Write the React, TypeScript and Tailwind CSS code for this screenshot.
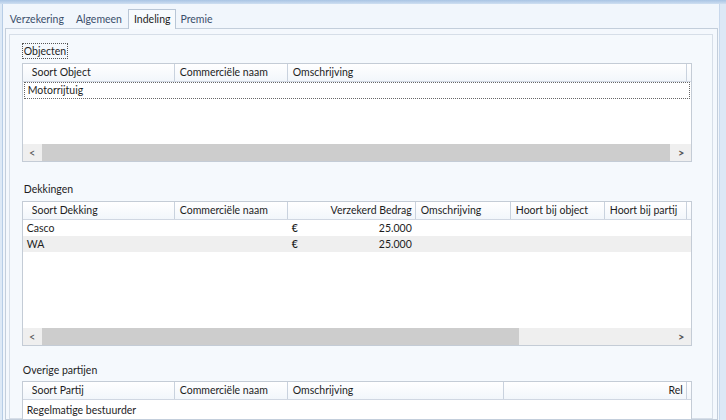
import React from 'react';

type Col = { label: string; w: number; align?: 'left' | 'right'; pad?: number };

const FONT = { fontFamily: 'Lato, "Noto Sans", "Open Sans", sans-serif' };

function Header({ cols }: { cols: Col[] }) {
  return (
    <div className="flex h-[18px] border-b border-[#d0d7e2] bg-gradient-to-b from-[#ffffff] to-[#f2f6fb]">
      {cols.map((c, i) => (
        <div
          key={i}
          style={{ width: c.w, paddingLeft: c.pad ?? 5 }}
          className={`shrink-0 h-full border-r border-[#c9d2de] pr-[3px] leading-[17px] text-[#1e1e1e] whitespace-nowrap overflow-hidden ${
            c.align === 'right' ? 'text-right' : ''
          }`}
        >
          {c.label}
        </div>
      ))}
    </div>
  );
}

function ScrollBar({ thumb }: { thumb: number }) {
  return (
    <div className="flex h-[17px] items-center bg-[#efefef]">
      <div className="w-[19px] text-center text-[11px] text-[#555] leading-[17px]">&lt;</div>
      <div className="flex-1 h-full flex">
        <div style={{ width: thumb }} className="h-full bg-[#cdcdcd]" />
      </div>
      <div className="w-[19px] text-center text-[11px] font-bold text-[#555] leading-[17px]">&gt;</div>
    </div>
  );
}

export default function App() {
  const objCols: Col[] = [
    { label: 'Soort Object', w: 152, pad: 9 },
    { label: 'Commerciële naam', w: 113 },
    { label: 'Omschrijving', w: 399 },
  ];
  const dekCols: Col[] = [
    { label: 'Soort Dekking', w: 152, pad: 9 },
    { label: 'Commerciële naam', w: 113 },
    { label: 'Verzekerd Bedrag', w: 128, align: 'right' },
    { label: 'Omschrijving', w: 95 },
    { label: 'Hoort bij object', w: 94 },
    { label: 'Hoort bij partij', w: 82 },
  ];
  const partCols: Col[] = [
    { label: 'Soort Partij', w: 152, pad: 9 },
    { label: 'Commerciële naam', w: 113 },
    { label: 'Omschrijving', w: 216 },
    { label: 'Rel', w: 183, align: 'right' },
  ];

  return (
    <div className="w-[726px] h-[420px] overflow-hidden bg-[#f1f6fc] text-[10.5px] text-[#1e1e1e]" style={FONT}>
      <div className="h-[4px] bg-gradient-to-b from-[#a9c4e4] to-[#cfdff1]" />
      <div className="flex h-[416px]">
        <div className="w-[3px] border-r border-[#b7cde6] bg-[#dde9f6]" />
        <div className="flex-1 flex flex-col pl-[2px] pr-[1px] min-h-0">
          {/* tabs */}
          <div className="flex shrink-0 items-end h-[24px] pl-[1px]">
            <div className="px-[4px] h-[18px] leading-[18px] text-[#3b4f6b]">Verzekering</div>
            <div className="px-[4px] ml-[4px] h-[18px] leading-[18px] text-[#3b4f6b]">Algemeen</div>
            <div className="relative -mb-px z-10 ml-[2px] px-[5px] h-[20px] leading-[18px] border border-b-0 border-[#b9c6d6] bg-[#f7fafd] text-[#1e1e1e]">
              Indeling
            </div>
            <div className="px-[4px] h-[18px] leading-[18px] text-[#3b4f6b]">Premie</div>
          </div>
          {/* tab page */}
          <div className="flex-1 min-h-0 overflow-hidden border border-[#c3cedb] bg-[#f4f8fd] pt-[5px] pl-[3px] pr-[4px]">
            <div className="h-full border border-[#d6dee8] bg-[#f5f9fd] pl-[12px] pr-[20px] pt-[8px]">
              {/* Objecten */}
              <div className="flex">
                <div className="border border-dotted border-[#555] px-[1px] leading-[14px]">Objecten</div>
              </div>
              <div className="mt-[4px] w-[670px] border border-[#c4ccd6] bg-white">
                <Header cols={objCols} />
                <div className="h-[62px]">
                  <div className="mx-px h-[17px] border border-dotted border-[#666] pl-[3px] leading-[15px]">Motorrijtuig</div>
                </div>
                <ScrollBar thumb={628} />
              </div>

              {/* Dekkingen */}
              <div className="mt-[19px] pl-[2px] leading-[16px]">Dekkingen</div>
              <div className="mt-[4px] w-[670px] border border-[#c4ccd6] bg-white">
                <Header cols={dekCols} />
                <div className="h-[108px]">
                  {[
                    { n: 'Casco', bg: 'bg-white' },
                    { n: 'WA', bg: 'bg-[#efefef]' },
                  ].map((r) => (
                    <div key={r.n} className={`flex h-[16px] leading-[16px] ${r.bg}`}>
                      <div className="w-[265px] shrink-0 pl-[4px]">{r.n}</div>
                      <div className="w-[128px] shrink-0 flex justify-between pl-[4px] pr-[4px]">
                        <span className="font-semibold">€</span>
                        <span>25.000</span>
                      </div>
                    </div>
                  ))}
                </div>
                <ScrollBar thumb={477} />
              </div>

              {/* Overige partijen */}
              <div className="mt-[16px] pl-[1px] leading-[16px]">Overige partijen</div>
              <div className="mt-[3px] w-[670px] border border-[#c4ccd6] bg-white">
                <Header cols={partCols} />
                <div className="h-[60px] pt-[2px]">
                  <div className="h-[16px] leading-[16px] pl-[4px]">Regelmatige bestuurder</div>
                </div>
              </div>
            </div>
          </div>
        </div>
        <div className="w-[8px] border-l border-[#c8d8ec] bg-[#dce8f6]" />
      </div>
    </div>
  );
}
